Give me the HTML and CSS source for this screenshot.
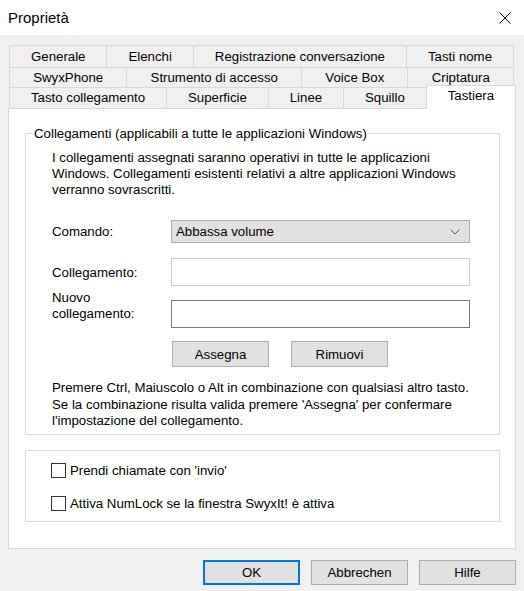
FILE: index.html
```html
<!DOCTYPE html>
<html lang="it">
<head>
  <meta charset="UTF-8" />
  <title>Proprietà</title>
  <link rel="stylesheet" href="styles.css">
</head>
<body>
  <div class="titlebar">
    <span class="title">Proprietà</span>
    <button class="close" type="button" aria-label="Chiudi">
      <svg width="12" height="12" viewBox="0 0 12 12"><path d="M0.5 0.5 L11.5 11.5 M11.5 0.5 L0.5 11.5" stroke="#000" stroke-width="1" fill="none"/></svg>
    </button>
  </div>

  <div class="dialog">
    <!-- tab strip, three rows -->
    <div class="tabs">
      <div class="tab-row row-1">
        <div class="tab">Generale</div>
        <div class="tab">Elenchi</div>
        <div class="tab">Registrazione conversazione</div>
        <div class="tab">Tasti nome</div>
      </div>
      <div class="tab-row row-2">
        <div class="tab">SwyxPhone</div>
        <div class="tab">Strumento di accesso</div>
        <div class="tab">Voice Box</div>
        <div class="tab">Criptatura</div>
      </div>
      <div class="tab-row row-3">
        <div class="tab">Tasto collegamento</div>
        <div class="tab">Superficie</div>
        <div class="tab">Linee</div>
        <div class="tab">Squillo</div>
        <div class="tab active">Tastiera</div>
      </div>
    </div>

    <div class="panel">
      <fieldset class="group shortcuts">
        <legend>Collegamenti (applicabili a tutte le applicazioni Windows)</legend>
        <p class="note">I collegamenti assegnati saranno operativi in tutte le applicazioni<br>Windows. Collegamenti esistenti relativi a altre applicazioni Windows<br>verranno sovrascritti.</p>

        <div class="field-grid">
          <label class="cmd-label">Comando:</label>
          <div class="select">
            <span>Abbassa volume</span>
            <svg width="10" height="6" viewBox="0 0 10 6"><path d="M0.5 0.5 L5 5 L9.5 0.5" stroke="#555" stroke-width="1" fill="none"/></svg>
          </div>

          <label class="cur-label">Collegamento:</label>
          <div class="input disabled"></div>

          <label class="new-label">Nuovo<br>collegamento:</label>
          <div class="input new-input"></div>

          <div class="actions">
            <button type="button" class="btn">Assegna</button>
            <button type="button" class="btn">Rimuovi</button>
          </div>
        </div>

        <p class="note hint">Premere Ctrl, Maiuscolo o Alt in combinazione con qualsiasi altro tasto.<br>Se la combinazione risulta valida premere 'Assegna' per confermare<br>l'impostazione del collegamento.</p>
      </fieldset>

      <fieldset class="group options">
        <label class="check"><span class="box"></span>Prendi chiamate con 'invio'</label>
        <label class="check"><span class="box"></span>Attiva NumLock se la finestra SwyxIt! è attiva</label>
      </fieldset>
    </div>

    <div class="footer">
      <button type="button" class="btn default">OK</button>
      <button type="button" class="btn">Abbrechen</button>
      <button type="button" class="btn">Hilfe</button>
    </div>
  </div>
</body>
</html>
```

FILE: styles.css
```css
* { box-sizing: border-box; }
body {
  margin: 0;
  width: 524px;
  height: 591px;
  background: #f0f0f0;
  font-family: "Liberation Sans", Arial, sans-serif;
  font-size: 13.25px;
  color: #000;
  overflow: hidden;
}

/* title bar */
.titlebar {
  height: 35px;
  background: #fff;
  display: flex;
  align-items: center;
  justify-content: space-between;
  padding: 0 13px 0 8px;
}
.title {
  font-size: 15px;
  margin-top: -1px;
}
.close {
  border: none;
  background: none;
  padding: 0;
  display: flex;
}

.dialog {
  padding: 10px 0 0 8px;
}

/* tabs */
.tabs {
  margin-left: 1px;
  width: 505px;
}
.tab-row {
  display: flex;
}
.row-1 { height: 22px; }
.row-2 { height: 20px; }
.row-3 { height: 21px; }
.tab {
  flex: 1 1 auto;
  text-align: center;
  white-space: nowrap;
  border-top: 1px solid #d9d9d9;
  border-left: 1px solid #d9d9d9;
  padding: 0 3px;
}
.row-1 .tab { line-height: 21px; }
.row-2 .tab { line-height: 19px; }
.row-3 .tab { line-height: 20px; }
.tab:last-child {
  border-right: 1px solid #d9d9d9;
}
.tab.active {
  background: #fff;
  position: relative;
  z-index: 1;
  margin-top: -2px;
  margin-right: -2px;
  margin-bottom: -1px;
  border: 1px solid #d9d9d9;
  border-bottom: none;
  line-height: 19px;
}

/* page body */
.panel {
  width: 508px;
  height: 441px;
  background: #fff;
  border: 1px solid #d9d9d9;
  padding: 17px 0 0 16px;
}
.group {
  width: 475px;
  margin: 0;
  border: 1px solid #dcdcdc;
  min-inline-size: 0;
}
.group legend {
  padding: 0 1px;
  margin-left: -19px;
  line-height: 15px;
}
.shortcuts {
  padding: 9px 10px 4px 26px;
}
.note {
  margin: 0;
  line-height: 16px;
  white-space: nowrap;
}
.hint {
  margin-top: 13px;
  line-height: 16.5px;
}

.field-grid {
  display: grid;
  grid-template-columns: 119px 299px;
  margin-top: 22px;
  align-items: center;
}
.select {
  height: 23px;
  background: #e1e1e1;
  border: 1px solid #adadad;
  display: flex;
  align-items: center;
  justify-content: space-between;
  padding: 0 9px 0 4px;
}
.input {
  height: 28px;
  border: 1px solid #7a7a7a;
  background: #fff;
}
.input.disabled {
  border-color: #cccccc;
  margin-top: 15px;
}
.cur-label { margin-top: 15px; }
.new-label {
  align-self: start;
  margin-top: 4px;
  line-height: 16px;
}
.new-input { margin-top: 14px; }
.actions {
  grid-column: 2;
  display: flex;
  gap: 22px;
  margin-top: 13px;
  padding-left: 1px;
}

.btn {
  width: 97px;
  height: 26px;
  background: #e1e1e1;
  border: 1px solid #adadad;
  font-family: inherit;
  font-size: 13.25px;
  color: #000;
  padding: 0;
}
.btn.default {
  border: 2px solid #0078d7;
}

.options {
  margin-top: 15px;
  height: 72px;
  padding: 12px 0 0 25px;
}
.check {
  display: flex;
  align-items: center;
  gap: 4px;
  height: 16px;
  margin-bottom: 17px;
}
.box {
  width: 15px;
  height: 15px;
  border: 1px solid #333;
  background: #fff;
}

/* dialog buttons */
.footer {
  display: flex;
  justify-content: flex-end;
  gap: 11px;
  padding-right: 8px;
  margin-top: 11px;
}
.footer .btn { height: 25px; }
```
